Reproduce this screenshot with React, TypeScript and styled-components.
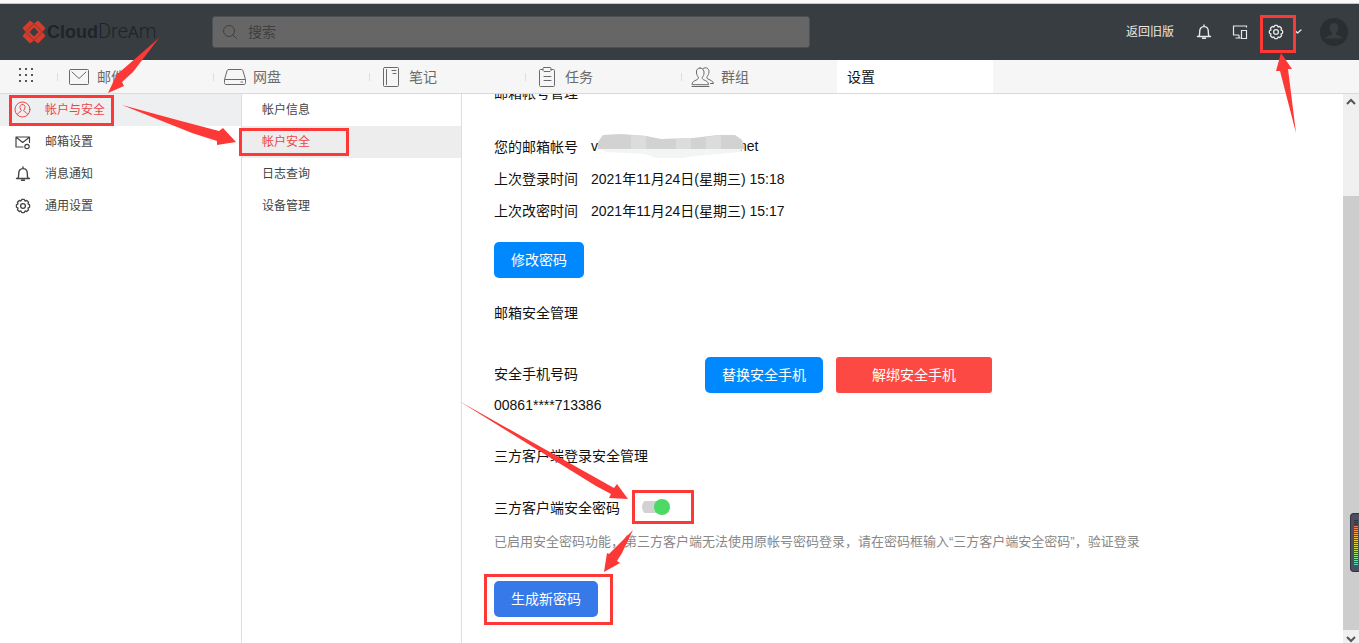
import React, { useState } from 'react';
import styled, { createGlobalStyle } from 'styled-components';

const GlobalStyle = createGlobalStyle`
  * { box-sizing: border-box; }
  html, body { margin: 0; overflow: hidden; }
  body, button, input {
    font-family: "Liberation Sans", "Noto Sans CJK SC", sans-serif;
    font-size: 14px;
  }
  body { color: #111; background: #fff; }
  button { border: 0; padding: 0; background: none; cursor: pointer; }
  a { color: inherit; text-decoration: none; }
  ul { list-style: none; margin: 0; padding: 0; }
`;

const Page = styled.div`
  position: relative;
  display: flex;
  flex-direction: column;
  height: 100vh;
  overflow: hidden;
  border-top: 3px solid #f8f8f8;
`;

const Header = styled.header`
  display: flex;
  align-items: center;
  flex: none;
  height: 57px;
  padding: 0 11px 0 22px;
  border-top: 1px solid #c4c6c8;
  background: #383d41;
`;

const Logo = styled.a`
  display: flex;
  align-items: center;
  flex: none;
  width: 190px;
  color: #202427;
  line-height: 24px;
  svg { flex: none; margin-right: 1px; }
`;
const LogoBold = styled.b`
  font-size: 18px;
`;
const LogoThin = styled.span`
  font-family: Roboto, sans-serif;
  font-size: 20px;
  font-weight: 300;
  b { font-family: "Liberation Sans", sans-serif; font-size: 16px; }
`;

const Search = styled.label`
  display: flex;
  align-items: center;
  flex: 0 1 598px;
  height: 32px;
  padding: 0 9px;
  gap: 10px;
  border: 1px solid #4b5054;
  border-radius: 3px;
  background: #666;
  color: #414141;
  input {
    flex: 1;
    min-width: 0;
    border: 0;
    outline: 0;
    padding: 0;
    background: none;
    color: #ddd;
  }
  input::placeholder { color: #3f3f3f; opacity: 1; }
  svg { flex: none; }
`;

const HeaderTools = styled.div`
  display: flex;
  align-items: center;
  margin-left: auto;
  color: #e8e8e8;
`;
const OldVersion = styled.a`
  margin-right: 12px;
  font-size: 12px;
  line-height: 18px;
`;
const IconButton = styled.button<{ $width?: number }>`
  display: flex;
  align-items: center;
  justify-content: center;
  width: ${p => p.$width ?? 36}px;
  height: 36px;
  color: #e8e8e8;
`;
const Avatar = styled.button`
  display: flex;
  margin-left: 18px;
`;

const NavBar = styled.nav`
  display: flex;
  flex: none;
  height: 34px;
  border-bottom: 1px solid #dadada;
  background: #f6f6f6;
`;
const AppsButton = styled.button`
  display: flex;
  align-items: center;
  justify-content: center;
  width: 57px;
  height: 30px;
  padding-right: 5px;
  color: #555;
`;
const Tab = styled.a<{ $active?: boolean }>`
  display: flex;
  align-items: center;
  flex: 0 1 156px;
  height: 33px;
  padding-left: ${p => (p.$active ? 10 : 0)}px;
  gap: 7px;
  color: ${p => (p.$active ? '#111' : '#6a6a6a')};
  background: ${p => (p.$active ? '#fff' : 'transparent')};
  border-radius: 3px 3px 0 0;
  line-height: 20px;
  white-space: nowrap;
  &::before {
    content: "";
    display: ${p => (p.$active ? 'none' : 'block')};
    width: 1px;
    height: 8px;
    margin-right: 3px;
    background: #dedede;
  }
  svg { flex: none; }
`;

const Body = styled.div`
  display: flex;
  flex: 1;
  min-height: 0;
`;
const SideMenu = styled.ul<{ $width: number }>`
  flex: none;
  width: ${p => p.$width}px;
  border-right: 1px solid #dedede;
`;
const MenuLink = styled.a<{ $active?: boolean; $indent: number; $highlight: string }>`
  display: flex;
  align-items: center;
  height: 32px;
  padding: 0 0 3px ${p => p.$indent}px;
  gap: 14px;
  font-size: 12px;
  color: ${p => (p.$active ? '#ee4444' : '#444')};
  background: ${p => (p.$active ? p.$highlight : 'transparent')};
`;
const MenuIcon = styled.span`
  display: flex;
  justify-content: center;
  width: 17px;
  padding-top: 2px;
`;

const Content = styled.main`
  flex: 1;
  min-width: 0;
  overflow: hidden;
  padding: 0 32px;
`;
const Scrolled = styled.div`
  margin-top: -36px;
`;
const Heading = styled.h2<{ $gap: number }>`
  margin: 19px 0 ${p => p.$gap}px;
  font-size: 14px;
  font-weight: 400;
  line-height: 32px;
`;
const Row = styled.div`
  display: flex;
  align-items: center;
  gap: 13px;
  height: 32px;
  padding-bottom: 1px;
  white-space: nowrap;
`;
const Account = styled.span`
  display: flex;
  align-items: center;
  svg {
    position: relative;
    margin-right: -5px;
  }
`;
const PhoneRow = styled.div`
  display: flex;
  align-items: flex-start;
  gap: 13px;
`;
const PhoneInfo = styled.div`
  width: 198px;
`;
const Button = styled.button<{ $tone: string; $pad?: number; $top?: number; $radius?: number }>`
  height: 36px;
  margin-top: ${p => p.$top ?? 0}px;
  padding: 0 ${p => p.$pad ?? 17}px 2px;
  border-radius: ${p => p.$radius ?? 5}px;
  background: ${p => p.$tone};
  color: #fff;
  white-space: nowrap;
`;
const Switch = styled.input`
  appearance: none;
  display: flex;
  align-items: center;
  justify-content: flex-end;
  width: 28px;
  height: 16px;
  margin: 0 0 0 9px;
  background: linear-gradient(#d2d2d2, #d2d2d2) 0 2px / 22px 12px no-repeat;
  border-radius: 8px;
  cursor: pointer;
  &::before {
    content: "";
    width: 16px;
    height: 16px;
    border-radius: 50%;
    background: #aaa;
  }
  &:checked::before { background: #4cd964; }
`;
const Hint = styled.p`
  margin: 3px 0 0;
  color: #888;
  font-size: 13px;
  line-height: 32px;
`;

const ScrollTrack = styled.div`
  display: flex;
  flex-direction: column;
  flex: none;
  width: 16px;
  background: #f0f0f0;
`;
const ScrollArrow = styled.button<{ $down?: boolean }>`
  display: flex;
  align-items: center;
  justify-content: center;
  height: ${p => (p.$down ? 13 : 16)}px;
  padding-top: ${p => (p.$down ? 4 : 0)}px;
  color: #555;
`;
const ScrollThumb = styled.div`
  flex: 1;
  margin-top: 86px;
  background: #cdcdcd;
`;

const Meter = styled.div`
  position: absolute;
  right: 0;
  top: 510px;
  width: 9px;
  height: 59px;
  padding: 6px 1px 0 3px;
  border: 1px solid #30343f;
  border-right: 0;
  border-radius: 4px 0 0 4px;
  background: #4c505e;
  svg { display: block; }
`;
const Annotations = styled.svg`
  position: absolute;
  left: 0;
  top: -3px;
  pointer-events: none;
`;

const stroke = { fill: 'none', stroke: 'currentColor', strokeLinecap: 'round', strokeLinejoin: 'round' } as const;

const LogoMark = () => (
  <svg width="24" height="24" viewBox="0 0 24 24">
    <path
      fillRule="evenodd"
      fill="#d63c2c"
      d="M8 .5 12 3.500 16 .5 23.500 8l-3 4 3 4L16 23.500l-4-3-4 3L.5 16l3-4-3-4zM12 7.500 7.500 12l4.500 4.500 4.500-4.500z"
    />
    <path d="M12 3.500 20.500 12M20.500 12 12 20.500M12 20.500 3.500 12M3.500 12 12 3.500" fill="none" stroke="#5a3a38" strokeWidth=".7" />
  </svg>
);
const SearchIcon = () => (
  <svg width="16" height="16" viewBox="0 0 16 16" {...stroke}>
    <circle cx="7" cy="7" r="5.500" /><path d="m11 11 3.500 3.500" />
  </svg>
);
const BellIcon = ({ size = 16 }: { size?: number }) => (
  <svg width={size} height={size} viewBox="0 0 16 16" {...stroke} strokeWidth="1.400">
    <path d="M1.500 12.500h13M3 12.300c.7-.9.700-2 .7-4.800 0-2.900 1.500-4.900 4.300-4.900s4.300 2 4.300 4.900c0 2.800 0 3.900.7 4.800M8 1v1.500M6.500 14.300h3" />
  </svg>
);
const DevicesIcon = () => (
  <svg width="16" height="16" viewBox="0 0 16 16" fill="none" stroke="currentColor" strokeWidth="1.200">
    <path d="M14.500 3.500v-1.500h-13v9H7M3.500 14h5M7 11v3M9.500 6.500h5v8h-5z" />
  </svg>
);

/* Eight rounded teeth around the hub. */
const gearPath = (() => {
  const at = (r: number, deg: number) => {
    const a = (deg * Math.PI) / 180;
    return `${(8 + r * Math.cos(a)).toFixed(2)} ${(8 + r * Math.sin(a)).toFixed(2)}`;
  };
  let d = `M${at(5.4, -22.5)}`;
  for (let i = 0; i < 8; i++) {
    const c = i * 45;
    d += `L${at(6.7, c - 11)}L${at(6.7, c + 11)}L${at(5.4, c + 22.5)}`;
  }
  return `${d}Z`;
})();
const GearIcon = () => (
  <svg width="16" height="16" viewBox="0 0 16 16" {...stroke} strokeWidth="1.300">
    <path d={gearPath} />
    <circle cx="8" cy="8" r="2.400" />
  </svg>
);
const AvatarIcon = () => (
  <svg width="28" height="28" viewBox="0 0 28 28">
    <circle cx="14" cy="14" r="14" fill="#2a2e31" />
    <path d="M14 5c-2.700 0-4.400 2-4.400 4.700 0 2.300 1 4.200 2.400 5.200v1.300c-1 1-5.800 1.600-6.800 4.300h17.600c-1-2.700-5.800-3.300-6.800-4.300v-1.300c1.400-1 2.400-2.900 2.400-5.200C18.400 7 16.700 5 14 5z" fill="#383d40" />
  </svg>
);
const GridIcon = () => (
  <svg width="16" height="16" viewBox="0 0 16 16" fill="currentColor">
    {[0, 6, 12].flatMap(y => [1, 7, 13].map(x => <rect key={`${x}-${y}`} x={x} y={y + 1} width="2" height="2" />))}
  </svg>
);
const MailIcon = () => (
  <svg width="22" height="20" viewBox="0 0 22 20" {...stroke}>
    <rect x="1.500" y="2.500" width="19" height="15" rx="1" /><path d="m4 5 7 6.500L18 5" />
  </svg>
);
const DiskIcon = () => (
  <svg width="22" height="20" viewBox="0 0 22 20" {...stroke}>
    <path d="M4.500 2.500h13c1 0 1.300.8 1.500 1.500l2.500 8.500v3c0 1.500-.5 2-1.500 2H2c-1 0-1.500-.5-1.500-2v-3L3 4c.2-.7.500-1.500 1.500-1.500zM1 12.500h20M17 15h1.500" />
  </svg>
);
const NoteIcon = () => (
  <svg width="22" height="20" viewBox="0 0 22 20" {...stroke}>
    <rect x="3.500" y=".5" width="15" height="19" rx="1" /><path d="M6.500 2.500v15M12 3.500h4M13 6.500h3" />
  </svg>
);
const TaskIcon = () => (
  <svg width="22" height="20" viewBox="0 0 22 20" {...stroke}>
    <path d="M7 2.500H4.500c-.6 0-1 .4-1 1v15c0 .6.400 1 1 1h13c.6 0 1-.4 1-1v-15c0-.6-.4-1-1-1H15M7 1.500l.5-1h7l.5 1v2l-1 1H8l-1-1zM8 9.500h7M8 13.500h7" />
  </svg>
);
const GroupIcon = () => (
  <svg width="22" height="20" viewBox="1 0 22 20" overflow="visible" {...stroke}>
    <path d="M9 1C6.500 1 5 3 5.500 6c.2 2 1 3 1.800 4.200.4 1-.3 2-1.300 2.500-2.800 1.300-5 2-5 5h16.500c0-3-2-3.700-5-5-1-.5-1.600-1.500-1.200-2.500C12.300 9 13 8 13 6c.3-3-1.500-5-4-5zM1 19.500h17" />
    <path d="M12 1.500c3-2 6.300 0 6 3.500-.2 2-.8 3-1.800 4.500-.7 1.200-.2 2 .8 2.500 3 1.500 5 2 5.500 4.500h-3" />
  </svg>
);
const AccountIcon = () => (
  <svg width="17" height="17" viewBox="0 0 17 17" {...stroke}>
    <circle cx="8.500" cy="8.500" r="7.500" />
    <path d="M8.500 3.500c-1.800 0-2.800 1.300-2.500 3.100.2 1.200.6 1.900 1.200 2.500.3.800-.2 1.300-.9 1.700-1.300.6-2.300 1-2.600 2.500M8.500 3.500c1.800 0 2.800 1.300 2.500 3.100-.2 1.200-.6 1.900-1.200 2.500-.3.800.2 1.300.9 1.700 1.300.6 2.300 1 2.600 2.500" />
  </svg>
);
const MailGearIcon = () => (
  <svg width="17" height="16" viewBox="0 0 17 16" {...stroke} strokeWidth="1.200">
    <path d="M9 13H2V3h13.500v5.500M2.500 3.500l6.200 5L15 3.500" /><circle cx="13" cy="12.500" r="2.200" />
  </svg>
);
const Chevron = ({ up }: { up?: boolean }) => (
  <svg width="10" height="8" viewBox="0 0 10 8" fill="none" stroke="currentColor" strokeWidth="2">
    <path d={up ? 'M1 6l4-4 4 4' : 'M1 2l4 4 4-4'} />
  </svg>
);
const SmallChevron = () => (
  <svg width="8" height="6" viewBox="0 0 8 6" {...stroke} strokeWidth="1.300"><path d="m1 1.500 2.500 2.500L7 1" /></svg>
);
const Redaction = () => (
  <svg width="146" height="26" viewBox="0 0 146 26">
    <path d="M0 9 5 2l18-1 25 2 15 3 32-1 25-3h17l7 5 2 6-4 6-22 2-23 2-12 2H59l-13-4-18-1-20-1-7-4z" fill="#f3f4f4" />
    <path d="M0 9 5 2l18-1 25 2 15 3 32-1 25-3h17l7 5 2 6v3H0z" fill="#d2d2d3" />
    <path d="M33 2l15 1v13H33zM78 6l15-1v11H78zM108 4l15-2v14h-15z" fill="#dbdcdc" />
  </svg>
);

const tabs = [
  { label: '邮件', icon: <MailIcon /> },
  { label: '网盘', icon: <DiskIcon /> },
  { label: '笔记', icon: <NoteIcon /> },
  { label: '任务', icon: <TaskIcon /> },
  { label: '群组', icon: <GroupIcon /> },
];
const mainMenu = [
  { label: '帐户与安全', icon: <AccountIcon /> },
  { label: '邮箱设置', icon: <MailGearIcon /> },
  { label: '消息通知', icon: <BellIcon /> },
  { label: '通用设置', icon: <GearIcon /> },
];
const subMenu = ['帐户信息', '帐户安全', '日志查询', '设备管理'];

const LevelMeter = () => (
  <svg width="4" height="46" viewBox="0 0 4 46">
    <defs>
      <linearGradient id="level" x1="0" y1="0" x2="0" y2="1">
        <stop offset="0" stopColor="#f4764f" />
        <stop offset=".35" stopColor="#f5c83c" />
        <stop offset=".6" stopColor="#bfe050" />
        <stop offset="1" stopColor="#3fe3cc" />
      </linearGradient>
    </defs>
    <rect width="4" height="46" fill="#2f323d" />
    <rect y="6" width="4" height="40" fill="url(#level)" />
    {Array.from({ length: 23 }, (_, i) => (
      <rect key={i} y={i * 2 + 1} width="4" height="1" fill="#4c505e" />
    ))}
  </svg>
);

export default function App() {
  const [enabled, setEnabled] = useState(true);
  return (
    <>
      <GlobalStyle />
      <Page>
        <Header>
          <Logo href="#home">
            <LogoMark />
            <LogoBold>Cloud</LogoBold>
            <LogoThin>Dre<b>A</b>m</LogoThin>
          </Logo>
          <Search>
            <SearchIcon />
            <input type="text" placeholder="搜索" aria-label="搜索" />
          </Search>
          <HeaderTools>
            <OldVersion href="#old">返回旧版</OldVersion>
            <IconButton aria-label="通知"><BellIcon /></IconButton>
            <IconButton aria-label="设备"><DevicesIcon /></IconButton>
            <IconButton aria-label="设置"><GearIcon /></IconButton>
            <IconButton aria-label="更多" $width={8}><SmallChevron /></IconButton>
            <Avatar aria-label="用户"><AvatarIcon /></Avatar>
          </HeaderTools>
        </Header>
        <NavBar>
          <AppsButton aria-label="应用"><GridIcon /></AppsButton>
          {tabs.map(t => (
            <Tab key={t.label} href="#tab">
              {t.icon}
              {t.label}
            </Tab>
          ))}
          <Tab href="#settings" $active>设置</Tab>
        </NavBar>
        <Body>
          <SideMenu $width={242}>
            {mainMenu.map((m, i) => (
              <li key={m.label}>
                <MenuLink href="#menu" $indent={14} $highlight="#eeeff1" $active={i === 0}>
                  <MenuIcon>{m.icon}</MenuIcon>
                  {m.label}
                </MenuLink>
              </li>
            ))}
          </SideMenu>
          <SideMenu $width={220}>
            {subMenu.map((label, i) => (
              <li key={label}>
                <MenuLink href="#sub" $indent={20} $highlight="#ededed" $active={i === 1}>{label}</MenuLink>
              </li>
            ))}
          </SideMenu>
          <Content>
            <Scrolled>
              <Heading $gap={21}>邮箱帐号管理</Heading>
              <Row><span>您的邮箱帐号</span><Account>v<Redaction />net</Account></Row>
              <Row><span>上次登录时间</span><span>2021年11月24日(星期三) 15:18</span></Row>
              <Row><span>上次改密时间</span><span>2021年11月24日(星期三) 15:17</span></Row>
              <Button $tone="#0089ff" $top={16}>修改密码</Button>
              <Heading $gap={28}>邮箱安全管理</Heading>
              <PhoneRow>
                <PhoneInfo>
                  <Row>安全手机号码</Row>
                  <Row>00861****713386</Row>
                </PhoneInfo>
                <Button $tone="#0089ff">替换安全手机</Button>
                <Button $tone="#fc4943" $pad={36} $radius={3}>解绑安全手机</Button>
              </PhoneRow>
              <Heading $gap={19}>三方客户端登录安全管理</Heading>
              <Row>
                <label htmlFor="client-password">三方客户端安全密码</label>
                <Switch id="client-password" type="checkbox" checked={enabled} onChange={e => setEnabled(e.target.checked)} />
              </Row>
              <Hint>已启用安全密码功能，第三方客户端无法使用原帐号密码登录，请在密码框输入“三方客户端安全密码”，验证登录</Hint>
              <Button $tone="#3779e8" $top={23}>生成新密码</Button>
            </Scrolled>
          </Content>
          <ScrollTrack>
            <ScrollArrow aria-label="向上滚动"><Chevron up /></ScrollArrow>
            <ScrollThumb />
            <ScrollArrow aria-label="向下滚动" $down><Chevron /></ScrollArrow>
          </ScrollTrack>
        </Body>
        <Meter><LevelMeter /></Meter>
        <Annotations width="1359" height="643" viewBox="0 0 1359 643">
          <g fill="none" stroke="#fc3937" strokeWidth="3">
            <rect x="10.500" y="96.500" width="102" height="28" />
            <rect x="240.500" y="129.500" width="107" height="25" />
            <rect x="1261.500" y="16.500" width="33" height="35" />
            <rect x="633.500" y="491.500" width="59" height="31" />
            <rect x="485.500" y="575.500" width="126" height="48" />
          </g>
          <g fill="#fc3937">
            <path d="M159 38 136 58 114 77l2-1-8 17 16-7-2-4 11-10z" />
            <path d="M122 105 181 121 219 131l4-3 13 14-19 3v-4l-25-8z" />
            <path d="M1296 133 1288 69h4l-11-16-5 18h4z" />
            <path d="M459 401 614 488l3-4 11 15-19-1 2-4-15-8z" />
            <path d="M633 530 609 554l-2-1-3 19 16-9-3-2 5-8z" />
          </g>
        </Annotations>
      </Page>
    </>
  );
}
